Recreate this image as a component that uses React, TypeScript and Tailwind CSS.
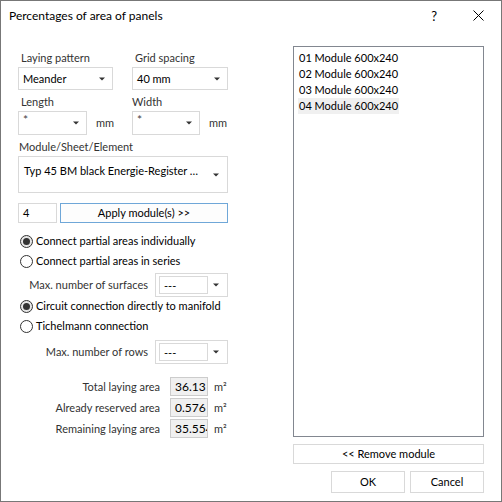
import React from 'react';

const font = { fontFamily: '"Segoe UI", Lato, "Noto Sans", sans-serif' };

function Arrow() {
  return (
    <svg width="6" height="4" viewBox="0 0 6 4" className="shrink-0">
      <path d="M0 0.5 H6 L3 3.5 Z" fill="#333" />
    </svg>
  );
}

function Combo({ value, className = '' }: { value: string; className?: string }) {
  return (
    <div className={`flex items-center justify-between border border-[#d9d9d9] bg-white pl-[4px] pr-[7px] ${className}`}>
      <span className="text-black">{value}</span>
      <Arrow />
    </div>
  );
}

function EditCombo({ className = '' }: { className?: string }) {
  return (
    <div className={`relative flex items-center justify-end border border-[#d9d9d9] bg-white pr-[7px] ${className}`}>
      <span className="absolute left-[4px] top-[2px] text-[12px] leading-[12px] text-[#444]">*</span>
      <Arrow />
    </div>
  );
}

function SmallCombo() {
  return (
    <div className="flex h-[24px] w-[73px] items-center border border-[#d9d9d9] bg-white pl-[3px] pr-[8px]">
      <div className="flex h-[18px] w-[49px] items-center border border-[#d9d9d9] pl-[4px] leading-none">---</div>
      <div className="ml-auto">
        <Arrow />
      </div>
    </div>
  );
}

function Radio({ checked, label }: { checked?: boolean; label: string }) {
  return (
    <div className="flex h-[20px] items-center whitespace-nowrap">
      <div className={`ml-[2px] flex h-[13px] w-[13px] shrink-0 items-center justify-center rounded-full border border-[#333] ${checked ? 'bg-[#e6e6e6]' : 'bg-white'}`}>
        {checked && <div className="h-[7px] w-[7px] rounded-full bg-[#333]" />}
      </div>
      <span className="ml-[3px]">{label}</span>
    </div>
  );
}

function AreaRow({ label, value }: { label: string; value: string }) {
  return (
    <div className="flex h-[19px] items-center whitespace-nowrap">
      <span className="w-[142px] text-right text-[#333]">{label}</span>
      <div className="ml-[10px] flex h-[19px] w-[38px] items-center overflow-hidden border border-[#cccccc] bg-[#f0f0f0] pl-[4px] text-[12px] text-black">
        {value}
      </div>
      <span className="ml-[6px] text-[#333]">m²</span>
    </div>
  );
}

export default function App() {
  return (
    <div className="h-[502px] w-[502px] whitespace-nowrap border border-[#777] bg-white text-[11px] leading-[16px] text-black" style={font}>
      <div className="flex h-[29px] items-center pl-[8px] pr-[17px] text-[12px]">
        <span className="mt-[1px]">Percentages of area of panels</span>
        <span className="ml-auto mr-[36px] text-[13px]">?</span>
        <svg width="11" height="11" viewBox="0 0 11 11">
          <path d="M0.5 0.5 L10.5 10.5 M10.5 0.5 L0.5 10.5" stroke="#000" strokeWidth="1" />
        </svg>
      </div>

      <div className="flex">
        <div className="ml-[17px] w-[210px]">
          <div className="mt-[20px] flex">
            <div className="w-[95px]">
              <div className="pl-[3px] text-[#333]">Laying pattern</div>
              <Combo value="Meander" className="mt-[1px] h-[23px]" />
            </div>
            <div className="ml-[19px] w-[96px]">
              <div className="pl-[3px] text-[#333]">Grid spacing</div>
              <Combo value="40 mm" className="mt-[1px] h-[23px]" />
            </div>
          </div>

          <div className="mt-[4px] flex">
            <div className="w-[114px]">
              <div className="pl-[3px] text-[#333]">Length</div>
              <div className="mt-[1px] flex items-center">
                <EditCombo className="h-[24px] w-[69px]" />
                <span className="ml-[9px] text-[#333]">mm</span>
              </div>
            </div>
            <div className="w-[96px]">
              <div className="text-[#333]">Width</div>
              <div className="mt-[1px] flex items-center">
                <EditCombo className="h-[24px] w-[68px]" />
                <span className="ml-[9px] text-[#333]">mm</span>
              </div>
            </div>
          </div>

          <div className="mt-[4px] pl-[1px] text-[#333]">Module/Sheet/Element</div>
          <div className="mt-[1px] flex h-[37px] items-start justify-between border border-[#d9d9d9] pl-[5px] pr-[8px] pt-[6px]">
            <span>Typ 45 BM black Energie-Register …</span>
            <div className="mt-[10px]">
              <Arrow />
            </div>
          </div>

          <div className="mt-[10px] flex h-[20px]">
            <div className="flex w-[39px] items-center border border-[#d9d9d9] pl-[4px]">4</div>
            <div className="ml-[3px] flex flex-1 items-center justify-center border border-[#6fa7d8] bg-[#fdfdfd]">
              Apply module(s) &gt;&gt;
            </div>
          </div>

          <div className="mt-[8px]">
            <Radio checked label="Connect partial areas individually" />
            <Radio label="Connect partial areas in series" />
          </div>
          <div className="mt-[2px] flex items-center">
            <span className="w-[131px] text-right text-[#333]">Max. number of surfaces</span>
            <div className="ml-[7px]">
              <SmallCombo />
            </div>
          </div>
          <div className="mt-[-1px]">
            <Radio checked label="Circuit connection directly to manifold" />
            <Radio label="Tichelmann connection" />
          </div>
          <div className="mt-[4px] flex items-center">
            <span className="w-[131px] text-right text-[#333]">Max. number of rows</span>
            <div className="ml-[7px]">
              <SmallCombo />
            </div>
          </div>

          <div className="mt-[13px] flex flex-col gap-[2px]">
            <AreaRow label="Total laying area" value="36.13" />
            <AreaRow label="Already reserved area" value="0.576" />
            <AreaRow label="Remaining laying area" value="35.554" />
          </div>
        </div>

        <div className="ml-auto mr-[17px] mt-[16px] w-[191px]">
          <div className="h-[391px] border border-[#828790] px-[4px] pt-[3px]">
            {['01', '02', '03', '04'].map((n) => (
              <div key={n} className="flex h-[16px] items-center">
                <span className={`px-[1px] ${n === '04' ? 'bg-[#f0f0f0]' : ''}`}>{n} Module 600x240</span>
              </div>
            ))}
          </div>
          <div className="mt-[7px] flex h-[20px] items-center justify-center border border-[#d9d9d9]">
            &lt;&lt; Remove module
          </div>
          <div className="mt-[7px] flex justify-end gap-[5px]">
            <div className="flex h-[22px] w-[74px] items-center justify-center border border-[#d9d9d9]">OK</div>
            <div className="flex h-[22px] w-[74px] items-center justify-center border border-[#d9d9d9]">Cancel</div>
          </div>
        </div>
      </div>
    </div>
  );
}
